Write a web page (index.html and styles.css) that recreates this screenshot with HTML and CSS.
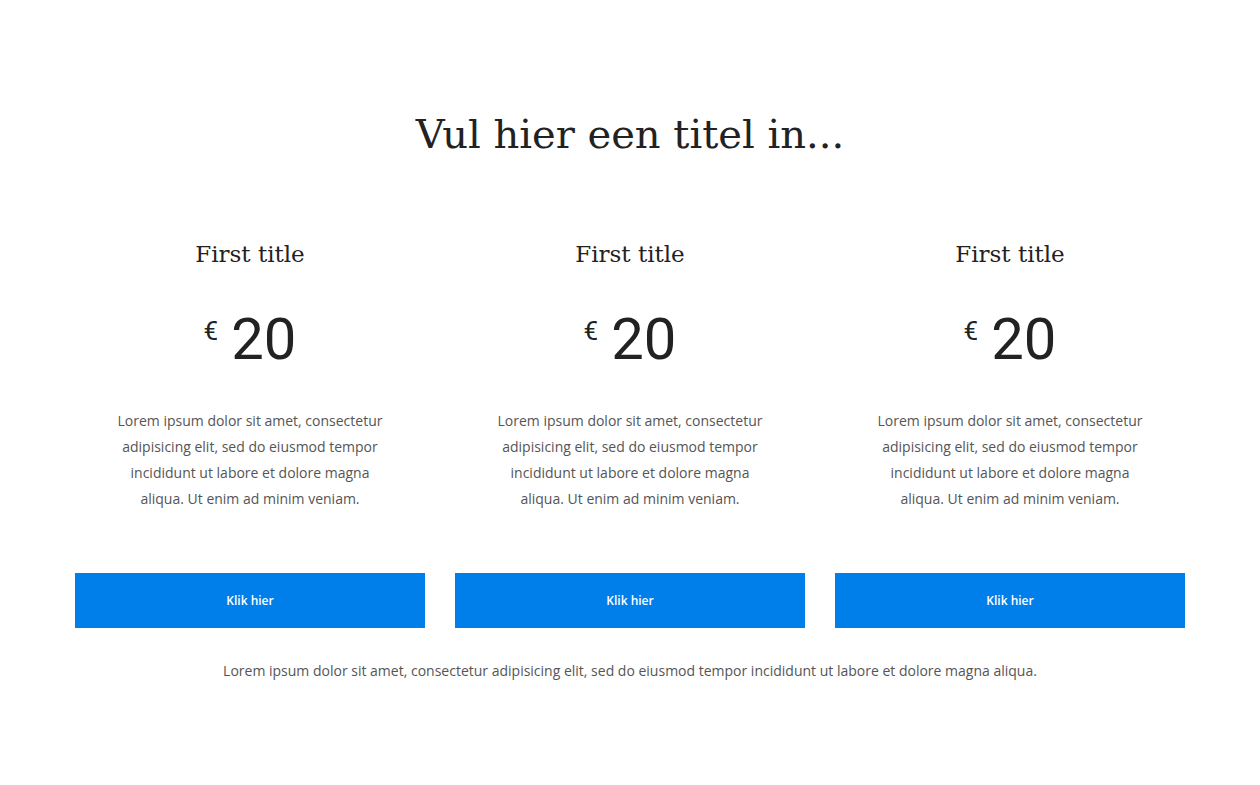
FILE: index.html
```html
<!DOCTYPE html>
<html lang="nl">
<head>
<meta charset="utf-8">
<title>Pricing</title>
<link rel="stylesheet" href="styles.css">
</head>
<body>
<section class="pricing">
  <h1 class="heading">Vul hier een titel in...</h1>
  <div class="columns">
    <div class="col">
      <h2 class="col-title">First title</h2>
      <div class="price"><span class="currency">€</span><span class="amount">20</span></div>
      <p class="desc">Lorem ipsum dolor sit amet, consectetur adipisicing elit, sed do eiusmod tempor incididunt ut labore et dolore magna aliqua. Ut enim ad minim veniam.</p>
      <a class="btn" href="#">Klik hier</a>
    </div>
    <div class="col">
      <h2 class="col-title">First title</h2>
      <div class="price"><span class="currency">€</span><span class="amount">20</span></div>
      <p class="desc">Lorem ipsum dolor sit amet, consectetur adipisicing elit, sed do eiusmod tempor incididunt ut labore et dolore magna aliqua. Ut enim ad minim veniam.</p>
      <a class="btn" href="#">Klik hier</a>
    </div>
    <div class="col">
      <h2 class="col-title">First title</h2>
      <div class="price"><span class="currency">€</span><span class="amount">20</span></div>
      <p class="desc">Lorem ipsum dolor sit amet, consectetur adipisicing elit, sed do eiusmod tempor incididunt ut labore et dolore magna aliqua. Ut enim ad minim veniam.</p>
      <a class="btn" href="#">Klik hier</a>
    </div>
  </div>
  <p class="footnote">Lorem ipsum dolor sit amet, consectetur adipisicing elit, sed do eiusmod tempor incididunt ut labore et dolore magna aliqua.</p>
</section>
</body>
</html>
```

FILE: styles.css
```css
* { box-sizing: border-box; }
html, body { margin: 0; padding: 0; background: #fff; }
body { font-family: "Open Sans", "Liberation Sans", sans-serif; color: #222; }

.pricing {
  width: 1110px;
  margin: 0 auto;
  padding-top: 104px;
}

.heading {
  margin: 0;
  text-align: center;
  font-family: "DejaVu Serif", "Liberation Serif", serif;
  font-weight: 300;
  font-size: 40px;
  line-height: 60px;
  color: #222;
}

.columns {
  display: grid;
  grid-template-columns: repeat(3, 350px);
  column-gap: 30px;
  margin-top: 73px;
}

.col {
  display: flex;
  flex-direction: column;
  align-items: center;
  text-align: center;
}

.col-title {
  margin: 0;
  font-family: "DejaVu Serif", "Liberation Serif", serif;
  font-weight: 300;
  font-size: 23px;
  line-height: 34px;
  color: #222;
}

.price {
  margin-top: 36px;
  display: flex;
  align-items: flex-start;
  font-family: Roboto, "Liberation Sans", sans-serif;
  color: #222;
  height: 64px;
}

.currency {
  font-size: 26px;
  line-height: 26px;
  margin-top: 11px;
  margin-right: 13px;
}

.amount {
  font-size: 58px;
  line-height: 64px;
}

.desc {
  margin: 37px 0 0;
  max-width: 280px;
  font-size: 14px;
  line-height: 26px;
  color: #555;
}

.btn {
  margin-top: 61px;
  align-self: stretch;
  display: flex;
  align-items: center;
  justify-content: center;
  height: 55px;
  background: #007eea;
  color: #fff;
  font-size: 12px;
  font-weight: 600;
  text-decoration: none;
}

.footnote {
  margin: 30px 0 0;
  text-align: center;
  font-size: 14px;
  line-height: 26px;
  color: #555;
}
```
